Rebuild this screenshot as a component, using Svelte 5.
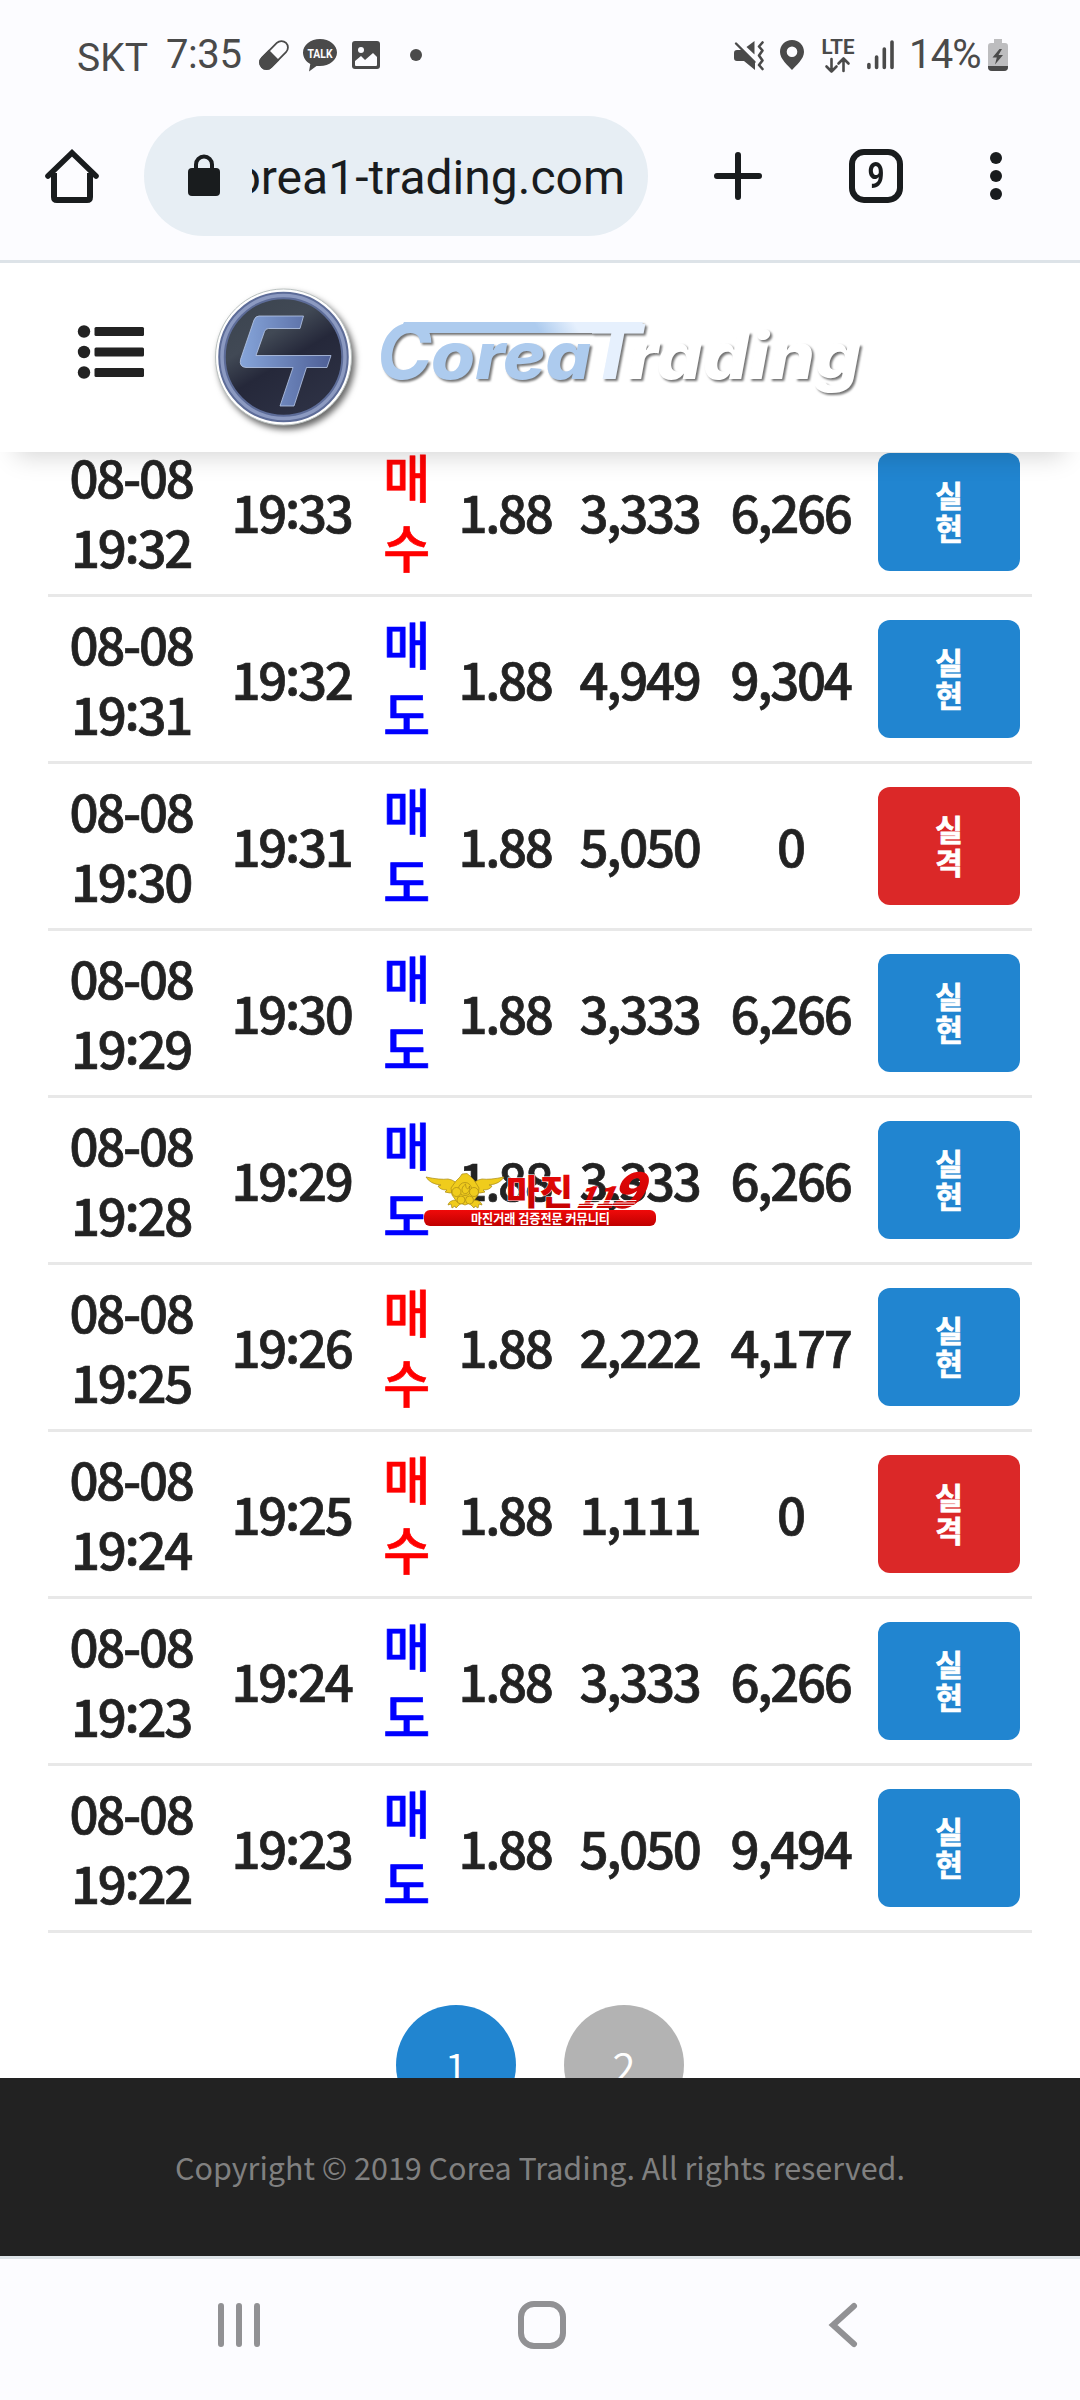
<script lang="ts">
	type Trade = {
		date: string;
		opened: string;
		closed: string;
		side: '매수' | '매도';
		amount: string;
		payout: string;
	};

	const RATE = '1.88';

	const trades: Trade[] = [
		{ date: '08-08', opened: '19:32', closed: '19:33', side: '매수', amount: '3,333', payout: '6,266' },
		{ date: '08-08', opened: '19:31', closed: '19:32', side: '매도', amount: '4,949', payout: '9,304' },
		{ date: '08-08', opened: '19:30', closed: '19:31', side: '매도', amount: '5,050', payout: '0' },
		{ date: '08-08', opened: '19:29', closed: '19:30', side: '매도', amount: '3,333', payout: '6,266' },
		{ date: '08-08', opened: '19:28', closed: '19:29', side: '매도', amount: '3,333', payout: '6,266' },
		{ date: '08-08', opened: '19:25', closed: '19:26', side: '매수', amount: '2,222', payout: '4,177' },
		{ date: '08-08', opened: '19:24', closed: '19:25', side: '매수', amount: '1,111', payout: '0' },
		{ date: '08-08', opened: '19:23', closed: '19:24', side: '매도', amount: '3,333', payout: '6,266' },
		{ date: '08-08', opened: '19:22', closed: '19:23', side: '매도', amount: '5,050', payout: '9,494' }
	];

	const pages = [1, 2];
	let current = $state(1);
</script>

<!-- the colon sits centred on the digits, not on the baseline -->
{#snippet time(value: string)}
	{value.split(':')[0]}<span class="colon">:</span>{value.split(':')[1]}
{/snippet}

<div class="phone">
	<div class="status">
		<div class="status-left">
			<span class="carrier">SKT</span>
			<span class="clock">7:35</span>
			<svg class="pill-icon" width="32" height="32" viewBox="0 0 32 32">
				<g transform="rotate(-45 16 16)">
					<rect x="-1" y="9.5" width="34" height="13" rx="6.5" fill="none" stroke="#4a4a4a" stroke-width="1.8" />
					<path d="M16 8.6H5.4a7.4 7.4 0 0 0 0 14.8H16z" fill="#4a4a4a" />
				</g>
			</svg>
			<svg class="talk-icon" width="34" height="33" viewBox="0 0 34 33">
				<path d="M17 0C7.6 0 0 6 0 13.5c0 5 3 9.2 7.3 11.6L6 32.5l7.5-5.6c1.1.1 2.3.2 3.5.2 9.4 0 17-6.1 17-13.6S26.4 0 17 0z" fill="#4a4a4a" />
				<text x="17" y="18.8" text-anchor="middle" textLength="25" lengthAdjust="spacingAndGlyphs">TALK</text>
			</svg>
			<svg class="photo-icon" width="28" height="28" viewBox="0 0 28 28">
				<rect width="28" height="28" rx="3" fill="#4a4a4a" />
				<circle cx="9" cy="9" r="3" fill="#fcfcff" />
				<path d="M3 20l6-5 4 4 8-7 4 4v8q0 1-1 1H4q-1 0-1-1z" fill="#fcfcff" />
			</svg>
			<i class="more-dot"></i>
		</div>
		<div class="status-right">
			<svg class="mute-icon" width="30" height="30" viewBox="0 0 30 30" fill="#4a4a4a">
				<path d="M0 12q0-3 3-3h6L21 21.5V29L10 20H3Q0 20 0 17z" />
				<path d="M12.5 6L20.5 0v13.5z" />
				<path d="M2 2.5l18.5 18.5" stroke="#4a4a4a" stroke-width="2.4" stroke-linecap="round" />
				<path d="M28.5 1.5l-3.5 4 3.5 4-3.5 5 3.5 5-3.5 4.5 3.5 4" fill="none" stroke="#4a4a4a" stroke-width="2.6" stroke-linecap="round" stroke-linejoin="round" />
			</svg>
			<svg class="pin-icon" width="24" height="30" viewBox="0 0 24 30">
				<path fill-rule="evenodd" d="M12 0C5 0 0 5.3 0 12c0 7 8 13.5 12 18 4-4.5 12-11 12-18C24 5.3 19 0 12 0zm0 6.5a5.3 5.3 0 1 1 0 10.6 5.3 5.3 0 0 1 0-10.6z" fill="#4a4a4a" />
			</svg>
			<svg class="lte-icon" width="32" height="34" viewBox="0 0 32 34">
				<text x="-0.5" y="14.5" textLength="33" lengthAdjust="spacingAndGlyphs">LTE</text>
				<path d="M9.5 20v12.5M4.5 27.5l5 5 5-5M21.5 32V19.5M16.5 24.5l5-5 5 5" fill="none" stroke="#4a4a4a" stroke-width="2.6" stroke-linecap="round" stroke-linejoin="round" />
			</svg>
			<svg class="signal-icon" width="27" height="30" viewBox="0 0 27 30">
				<path d="M1.9 24.5v3M9.6 17v10.5M17.3 9v18.5M25 2v25.5" stroke="#4a4a4a" stroke-width="3.6" stroke-linecap="round" />
			</svg>
			<span class="battery-text">14%</span>
			<svg class="battery-icon" width="20" height="32" viewBox="0 0 20 32">
				<path d="M6 0h8v4h3q3 0 3 3v21q0 4-4 4H4q-4 0-4-4V7q0-3 3-3h3z" fill="#bdbdbf" />
				<path d="M0 27h20v1q0 4-4 4H4q-4 0-4-4z" fill="#4a4a4a" />
				<path d="M11.5 10L4.5 18.5h4.3L7 25.5l8-9.5h-4.5L14 10z" fill="#4a4a4a" />
			</svg>
		</div>
	</div>

	<div class="toolbar">
		<svg class="home-icon" width="54" height="54" viewBox="0 0 54 54" fill="none" stroke="#191c1e" stroke-width="6">
			<path d="M3 27L27 3.8 51 27" stroke-linecap="round" stroke-width="5.6" />
			<path d="M9 24v24q0 3 3 3h30q3 0 3-3V24" />
		</svg>
		<div class="address">
			<svg class="lock-icon" width="32" height="42" viewBox="0 0 32 42">
				<rect y="14" width="32" height="28" rx="4" fill="#191c1e" />
				<path d="M8 16V10.5a8 8 0 0 1 16 0V16" fill="none" stroke="#191c1e" stroke-width="4" />
			</svg>
			<div class="url"><span>corea1-trading.com</span></div>
		</div>
		<svg class="plus-icon" width="48" height="48" viewBox="0 0 48 48">
			<path d="M24 3v42M3 24h42" stroke="#191c1e" stroke-width="6" stroke-linecap="round" />
		</svg>
		<div class="tabs"><span>9</span></div>
		<svg class="menu-icon" width="12" height="48" viewBox="0 0 12 48" fill="#191c1e">
			<circle cx="6" cy="6" r="6" />
			<circle cx="6" cy="24" r="6" />
			<circle cx="6" cy="42" r="6" />
		</svg>
	</div>

	<header>
		<svg class="list-icon" width="66" height="54" viewBox="0 0 66 54" fill="#222">
			{#each [6.5, 27, 47.5] as y}
				<circle cx="6" cy={y} r="6.2" />
				<rect x="16.5" y={y - 4.5} width="49.5" height="9" rx="1.5" />
			{/each}
		</svg>
		<svg class="logo" width="660" height="150" viewBox="210 280 660 150">
			<defs>
				<linearGradient id="disc" x1="0" y1="0" x2="0.6" y2="1">
					<stop offset="0" stop-color="#3a434e" />
					<stop offset="0.4" stop-color="#414955" />
					<stop offset="0.62" stop-color="#25283a" />
					<stop offset="1" stop-color="#2d3144" />
				</linearGradient>
				<linearGradient id="mark" x1="0" y1="0" x2="1" y2="0">
					<stop offset="0" stop-color="#86a5da" />
					<stop offset="1" stop-color="#4e5f96" />
				</linearGradient>
				<linearGradient id="bar" gradientUnits="userSpaceOnUse" x1="545" y1="340" x2="574" y2="322">
					<stop offset="0" stop-color="#adcbee" />
					<stop offset="1" stop-color="#e6f0fd" />
				</linearGradient>
			</defs>
			<g class="emblem">
				<circle cx="283.5" cy="357" r="68" fill="#fff" stroke="#b9c0bf" stroke-width="1" />
				<circle cx="283.5" cy="357" r="61.5" fill="url(#disc)" stroke="#5d6c98" stroke-width="7.5" />
				<circle cx="283.5" cy="357" r="61.5" fill="none" stroke="#8c9ac1" stroke-width="3.5" />
				<path d="M259 316H303.5L300 328.5H268.5Q265.5 328.5 264.5 331.5L256 355.5H331L327 367.5H306.5L294 406H280L293 367.5H246Q239 367 240.5 359.5L254 320Q255.5 316 259 316Z" fill="url(#mark)" stroke="#b9c9e8" stroke-width="0.8" />
			</g>
			<g class="wordmark">
				<text class="cap" x="377" y="378.5" textLength="55" lengthAdjust="spacingAndGlyphs" fill="#adcbee">C</text>
				<text class="low" x="431" y="378.5" textLength="160" lengthAdjust="spacingAndGlyphs" fill="#adcbee">orea</text>
				<text class="cap" x="584" y="378.5" textLength="58" lengthAdjust="spacingAndGlyphs" fill="#e6f0fd">T</text>
				<text class="low" x="628" y="378.5" textLength="233" lengthAdjust="spacingAndGlyphs" fill="#fff">rading</text>
				<path d="M404 322H643L640 333H398Z" fill="url(#bar)" />
			</g>
		</svg>
	</header>

	<main>
		<div class="trades">
			{#each trades as trade}
				<div class="row">
					<div>{trade.date}<br />{@render time(trade.opened)}</div>
					<div>{@render time(trade.closed)}</div>
					<div class={trade.side === '매수' ? 'buy' : 'sell'}>{trade.side[0]}<br />{trade.side[1]}</div>
					<div>{RATE}</div>
					<div>{trade.amount}</div>
					<div>{trade.payout}</div>
					<div class="result" class:lost={trade.payout === '0'}>실<br />{trade.payout === '0' ? '격' : '현'}</div>
				</div>
			{/each}
		</div>
		<div class="pager">
			{#each pages as page}
				<button type="button" class:active={page === current} onclick={() => (current = page)}>{page}</button>
			{/each}
		</div>
		<svg class="watermark" width="236" height="60" viewBox="422 1170 236 60">
			<defs>
				<linearGradient id="red" x1="0" y1="0" x2="0" y2="1">
					<stop offset="0" stop-color="#f00a0a" />
					<stop offset="1" stop-color="#c00000" />
				</linearGradient>
			</defs>
			<g fill="#f0cc1c" stroke="#a98a16" stroke-width="0.7">
				<path d="M426 1177q14 3 22 2 8 1 12 9l-3 4q-8 2-12 0l2-2q-7 0-9-4l3-1q-11-1-15-8z" />
				<path d="M504 1177q-14 3-22 2-8 1-12 9l3 4q8 2 12 0l-2-2q7 0 9-4l-3-1q11-1 15-8z" />
				<path d="M457 1200q-8 0-9 5l3-1 1 4 3-2 1 2 3-3 3-2zM473 1200q8 0 9 5l-3-1-1 4-3-2-1 2-3-3-3-2z" />
				<path d="M460 1177l2-3 5-.5 3 2.5 4 4 5 8-1 7-5 7-8 3-8-3-5-7-1-7 5-7z" />
				<circle cx="465" cy="1189" r="6.5" />
				<circle cx="456.5" cy="1192" r="4.5" />
				<circle cx="474" cy="1192" r="4.5" />
				<circle cx="461" cy="1200" r="4" />
				<circle cx="469.5" cy="1200" r="4" />
				<path d="M462.5 1192q-2-4 3-8 0 4 2 5 2-1 2-3 1 7-5 8z" />
			</g>
			<text class="wm-name" x="506" y="1204.5" textLength="67" lengthAdjust="spacingAndGlyphs" fill="url(#red)">마진</text>
			<g transform="translate(577 1208) skewX(-24)">
				<text class="wm-number" x="-2" y="0" textLength="38" lengthAdjust="spacingAndGlyphs" fill="url(#red)">11</text>
				<text class="wm-nine" x="31" y="0" textLength="33" lengthAdjust="spacingAndGlyphs" fill="url(#red)">9</text>
				<path d="M-2-7.500h58M-2-5h58M-2-2.500h58" stroke="#fff" stroke-width="0.8" />
			</g>
			<rect x="424" y="1210" width="232" height="16" rx="6" fill="url(#red)" />
			<text class="wm-tag" x="540.5" y="1222.500" text-anchor="middle" textLength="139" lengthAdjust="spacingAndGlyphs">마진거래 검증전문 커뮤니티</text>
		</svg>
	</main>

	<footer>Copyright © 2019 Corea Trading. All rights reserved.</footer>

	<nav>
		<svg width="48" height="48" viewBox="0 0 48 48">
			<path d="M6 5v38M24 5v38M42 5v38" />
		</svg>
		<svg width="48" height="48" viewBox="0 0 48 48">
			<rect x="3" y="3" width="42" height="42" rx="13" />
		</svg>
		<svg width="48" height="48" viewBox="0 0 48 48">
			<path d="M34 5L13 24l21 19" />
		</svg>
	</nav>
</div>

<style>
	:global(body) {
		margin: 0;
		background: #fff;
	}

	.phone {
		display: flex;
		flex-direction: column;
		width: 1080px;
		height: 2400px;
		overflow: hidden;
		font-family: 'Noto Sans CJK KR', sans-serif;
		color: #222;
	}

	svg {
		display: block;
		flex: none;
		overflow: visible;
	}

	.status {
		display: flex;
		justify-content: space-between;
		box-sizing: border-box;
		height: 116px;
		padding: 39px 72px 0 77px;
		background: #fcfcff;
		font-family: Roboto, sans-serif;
		font-size: 40px;
		line-height: 32px;
		color: #4a4a4a;
	}

	.status-left,
	.status-right {
		display: flex;
		align-items: flex-start;
		height: 32px;
	}

	.carrier {
		width: 72px;
		margin-top: 3px;
		font-size: 39px;
	}

	.clock {
		width: 91px;
		margin-left: 17px;
		letter-spacing: -0.4px;
	}

	.pill-icon {
		margin-left: 1px;
	}

	.talk-icon {
		margin-left: 13px;
	}

	.talk-icon text {
		font: 700 12px Roboto, sans-serif;
		fill: #fcfcff;
	}

	.photo-icon {
		margin: 2px 0 0 15px;
	}

	.more-dot {
		width: 12px;
		height: 12px;
		margin: 10px 0 0 30px;
		border-radius: 50%;
		background: #4a4a4a;
	}

	.mute-icon {
		margin-top: 2px;
	}

	.pin-icon {
		margin: 1px 0 0 16px;
	}

	.lte-icon {
		margin-left: 18px;
	}

	.lte-icon text {
		font: 700 20px Roboto, sans-serif;
		fill: #4a4a4a;
	}

	.signal-icon {
		margin: 1px 15px 0 13px;
	}

	.battery-text {
		width: 79px;
		letter-spacing: -0.8px;
	}

	.toolbar {
		display: flex;
		align-items: center;
		box-sizing: border-box;
		height: 147px;
		padding: 0 78px 24px 45px;
		border-bottom: 3px solid #dde3e8;
		background: #fcfcff;
	}

	.address {
		display: flex;
		align-items: center;
		width: 504px;
		height: 120px;
		margin-left: 45px;
		border-radius: 60px;
		background: #e7eef4;
	}

	.lock-icon {
		margin: -2px 0 0 44px;
	}

	.url {
		display: flex;
		justify-content: flex-end;
		width: 373px;
		margin: 3px 0 0 32px;
		overflow: hidden;
		font-family: Roboto, sans-serif;
		font-size: 48px;
		line-height: 60px;
		color: #191c1e;
	}

	.url span {
		flex: none;
	}

	.plus-icon {
		margin-left: 66px;
	}

	.tabs {
		box-sizing: border-box;
		width: 54px;
		height: 54px;
		margin-left: 87px;
		border: 6px solid #191c1e;
		border-radius: 15px;
		font: 700 36px/42px Roboto, sans-serif;
		text-align: center;
		color: #191c1e;
	}

	.tabs span {
		display: block;
		transform: scaleX(0.82);
	}

	.menu-icon {
		margin-left: auto;
	}

	header {
		position: relative;
		z-index: 1;
		display: flex;
		align-items: center;
		flex: none;
		box-sizing: border-box;
		height: 189px;
		padding-left: 78px;
		background: #fff;
		box-shadow: 0 20px 24px -16px rgba(0, 0, 0, 0.17);
	}

	.list-icon {
		margin-bottom: 11px;
	}

	.logo {
		margin: 0 0 5px 66px;
	}

	.emblem {
		filter: drop-shadow(3px 4px 3px rgba(0, 0, 0, 0.6));
	}

	.wordmark {
		font-family: Inter, 'Open Sans', sans-serif;
		font-style: italic;
		font-weight: 800;
		font-feature-settings: 'cv11' 1;
		filter: drop-shadow(2px 2px 1px rgba(0, 0, 0, 0.55));
	}

	.cap {
		font-size: 76px;
		font-weight: 700;
	}

	.low {
		font-size: 65px;
	}

	main {
		position: relative;
		flex: none;
		height: 1626px;
		overflow: hidden;
	}

	.trades {
		margin: -22px 48px 0;
	}

	.row {
		display: grid;
		grid-template-columns: 168px 153px 75px 124px 145px 157px 142px;
		align-items: center;
		height: 164px;
		border-bottom: 3px solid #e8e8e8;
		font-size: 51px;
		font-weight: 500;
		line-height: 70px;
		letter-spacing: -2.3px;
		text-align: center;
		-webkit-text-stroke: 0.7px currentColor;
	}

	.row > div:not(.result) {
		margin-top: -2px;
		padding-right: 2px;
	}

	.colon {
		line-height: 0;
		vertical-align: 5px;
	}

	.buy {
		color: #f00;
	}

	.sell {
		color: #00f;
	}

	.result {
		box-sizing: border-box;
		height: 118px;
		margin-left: 8px;
		margin-right: -8px;
		padding: 25px 2px 0 0;
		border-radius: 12px;
		background: #2185d0;
		font-size: 30px;
		font-weight: 700;
		line-height: 33px;
		color: #fff;
	}

	.result.lost {
		background: #db2828;
	}

	.pager {
		display: flex;
		justify-content: center;
		gap: 48px;
		margin-top: 72px;
	}

	.pager button {
		width: 120px;
		height: 120px;
		padding: 0;
		border: 0;
		border-radius: 50%;
		background: #b3b3b3;
		font: 350 42px/117px 'Noto Sans CJK KR', sans-serif;
		color: #fff;
	}

	.pager .active {
		background: #2185d0;
	}

	.watermark {
		position: absolute;
		top: 718px;
		left: 422px;
		font-family: 'Noto Sans CJK KR', sans-serif;
		font-weight: 900;
	}

	.wm-name {
		font-size: 35px;
		stroke: #fff;
		stroke-width: 1px;
		paint-order: stroke;
	}

	.wm-number {
		font-size: 30px;
	}

	.wm-nine {
		font-size: 49px;
	}

	.wm-tag {
		font-size: 13px;
		font-weight: 700;
		fill: #fff;
	}

	footer {
		flex: none;
		height: 178px;
		background: #222;
		font-size: 30.5px;
		line-height: 179px;
		text-align: center;
		color: #808080;
	}

	nav {
		display: flex;
		align-items: center;
		justify-content: space-between;
		box-sizing: border-box;
		height: 144px;
		padding: 0 212px 9px 215px;
		border-top: 3px solid #dde3e8;
		background: #fcfcff;
	}

	nav svg {
		fill: none;
		stroke: #919194;
		stroke-width: 6;
		stroke-linecap: round;
	}
</style>
